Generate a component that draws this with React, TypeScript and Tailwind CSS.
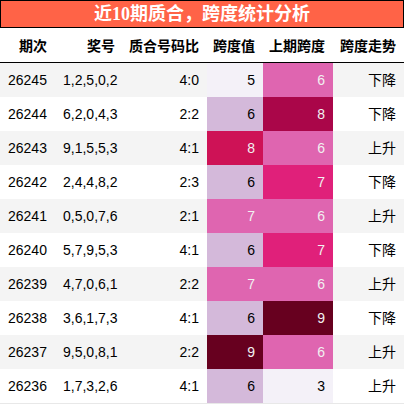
import React from "react";

const c4: Record<number, [string, string]> = {
  5: ["bg-[#f4f1f8]", "text-[#000]"],
  6: ["bg-[#d4b9da]", "text-[#000]"],
  7: ["bg-[#df65b0]", "text-[#f1f1f1]"],
  8: ["bg-[#ce1256]", "text-[#f1f1f1]"],
  9: ["bg-[#67001f]", "text-[#f1f1f1]"],
};
const c5: Record<number, [string, string]> = {
  3: ["bg-[#f4f1f8]", "text-[#000]"],
  6: ["bg-[#df65b0]", "text-[#f1f1f1]"],
  7: ["bg-[#e0207a]", "text-[#f1f1f1]"],
  8: ["bg-[#aa0649]", "text-[#f1f1f1]"],
  9: ["bg-[#67001f]", "text-[#f1f1f1]"],
};

const rows: [string, string, string, number, number, string][] = [
  ["26245", "1,2,5,0,2", "4:0", 5, 6, "下降"],
  ["26244", "6,2,0,4,3", "2:2", 6, 8, "下降"],
  ["26243", "9,1,5,5,3", "4:1", 8, 6, "上升"],
  ["26242", "2,4,4,8,2", "2:3", 6, 7, "下降"],
  ["26241", "0,5,0,7,6", "2:1", 7, 6, "上升"],
  ["26240", "5,7,9,5,3", "4:1", 6, 7, "下降"],
  ["26239", "4,7,0,6,1", "2:2", 7, 6, "上升"],
  ["26238", "3,6,1,7,3", "4:1", 6, 9, "下降"],
  ["26237", "9,5,0,8,1", "2:2", 9, 6, "上升"],
  ["26236", "1,7,3,2,6", "4:1", 6, 3, "上升"],
];

const grid = "grid grid-cols-[55px_68px_84px_56px_70px_71px]";

export default function App() {
  return (
    <div
      className="w-[404px] h-[405px] bg-white text-[14px] text-black overflow-hidden"
      style={{ fontFamily: '"Liberation Sans", "Noto Sans CJK SC", sans-serif' }}
    >
      <div
        className="h-[28px] bg-[#ff6347] border border-black flex items-center justify-center text-white font-bold text-[18px] leading-none"
        style={{ fontFamily: '"Liberation Serif", "Noto Sans CJK SC", serif' }}
      >
        近10期质合，跨度统计分析
      </div>
      <div className={`${grid} h-[35px] border-b border-black font-bold items-center`}>
        {["期次", "奖号", "质合号码比", "跨度值", "上期跨度", "跨度走势"].map((h) => (
          <div key={h} className="text-right pr-2 pt-[3px]">
            {h}
          </div>
        ))}
      </div>
      {rows.map((r, i) => {
        const a = c4[r[3]];
        const b = c5[r[4]];
        return (
          <div
            key={r[0]}
            className={`${grid} h-[34px] ${i % 2 === 0 ? "bg-[#f4f4f4]" : "bg-white"}`}
          >
            <div className="flex items-center pl-2">{r[0]}</div>
            <div className="flex items-center pl-2">{r[1]}</div>
            <div className="flex items-center justify-end pr-2">{r[2]}</div>
            <div className={`flex items-center justify-end pr-2 ${a[0]} ${a[1]}`}>{r[3]}</div>
            <div className={`flex items-center justify-end pr-2 ${b[0]} ${b[1]}`}>{r[4]}</div>
            <div className="flex items-center justify-end pr-2">{r[5]}</div>
          </div>
        );
      })}
      <div className="h-px bg-[#e8e8e8]" />
    </div>
  );
}
